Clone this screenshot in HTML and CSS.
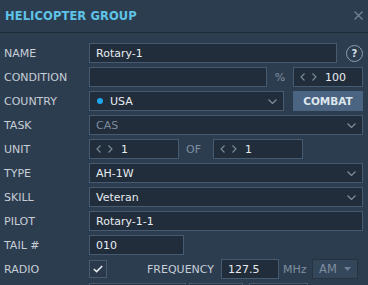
FILE: index.html
```html
<!DOCTYPE html>
<html lang="en">
<head>
  <meta charset="UTF-8" />
  <title>Helicopter Group</title>
  <link rel="stylesheet" href="styles.css">
</head>
<body>

  <div class="panel">
    <!-- Header -->
    <div class="header">
      <h1>HELICOPTER GROUP</h1>
      <svg class="close" width="9" height="9" viewBox="0 0 9 9">
        <path d="M0.5 0.5 L8.5 8.5 M8.5 0.5 L0.5 8.5" stroke="#6f8399" stroke-width="1.2" fill="none"/>
      </svg>
    </div>

    <!-- Form rows -->
    <div class="form">
      <div class="row">
        <span class="label">NAME</span>
        <div class="box grow">Rotary-1</div>
        <span class="help">?</span>
      </div>

      <div class="row">
        <span class="label">CONDITION</span>
        <div class="box w-cond"></div>
        <span class="unit pct">%</span>
        <div class="box spin w-small">
          <svg class="chev" width="5" height="8" viewBox="0 0 5 8"><path d="M4.5 0.5 L1 4 L4.5 7.5" /></svg>
          <svg class="chev" width="5" height="8" viewBox="0 0 5 8"><path d="M0.5 0.5 L4 4 L0.5 7.5" /></svg>
          <span class="num">100</span>
        </div>
      </div>

      <div class="row">
        <span class="label">COUNTRY</span>
        <div class="box select w-country">
          <span class="dot"></span>USA
          <svg class="caret" width="9" height="5" viewBox="0 0 9 5"><path d="M0.5 0.5 L4.5 4.5 L8.5 0.5" /></svg>
        </div>
        <button class="btn">COMBAT</button>
      </div>

      <div class="row">
        <span class="label">TASK</span>
        <div class="box select grow muted">
          CAS
          <svg class="caret" width="9" height="5" viewBox="0 0 9 5"><path d="M0.5 0.5 L4.5 4.5 L8.5 0.5" /></svg>
        </div>
      </div>

      <div class="row">
        <span class="label">UNIT</span>
        <div class="box spin w-unit">
          <svg class="chev" width="5" height="8" viewBox="0 0 5 8"><path d="M4.5 0.5 L1 4 L4.5 7.5" /></svg>
          <svg class="chev" width="5" height="8" viewBox="0 0 5 8"><path d="M0.5 0.5 L4 4 L0.5 7.5" /></svg>
          <span class="num">1</span>
        </div>
        <span class="unit of">OF</span>
        <div class="box spin w-unit">
          <svg class="chev" width="5" height="8" viewBox="0 0 5 8"><path d="M4.5 0.5 L1 4 L4.5 7.5" /></svg>
          <svg class="chev" width="5" height="8" viewBox="0 0 5 8"><path d="M0.5 0.5 L4 4 L0.5 7.5" /></svg>
          <span class="num">1</span>
        </div>
      </div>

      <div class="row">
        <span class="label">TYPE</span>
        <div class="box select grow">
          AH-1W
          <svg class="caret" width="9" height="5" viewBox="0 0 9 5"><path d="M0.5 0.5 L4.5 4.5 L8.5 0.5" /></svg>
        </div>
      </div>

      <div class="row">
        <span class="label">SKILL</span>
        <div class="box select grow">
          Veteran
          <svg class="caret" width="9" height="5" viewBox="0 0 9 5"><path d="M0.5 0.5 L4.5 4.5 L8.5 0.5" /></svg>
        </div>
      </div>

      <div class="row">
        <span class="label">PILOT</span>
        <div class="box grow">Rotary-1-1</div>
      </div>

      <div class="row">
        <span class="label">TAIL #</span>
        <div class="box w-tail">010</div>
      </div>

      <div class="row">
        <span class="label">RADIO</span>
        <div class="check">
          <svg width="10" height="8" viewBox="0 0 10 8"><path d="M0.8 4 L3.6 6.6 L9.2 1" stroke="#e6ebf0" stroke-width="1.6" fill="none"/></svg>
        </div>
        <span class="label freq">FREQUENCY</span>
        <div class="box w-freq">127.5</div>
        <span class="unit mhz">MHz</span>
        <div class="box am">
          AM
          <svg width="7" height="4" viewBox="0 0 7 4"><path d="M0 0 L7 0 L3.5 4 Z" fill="#6d7f92"/></svg>
        </div>
      </div>

      <!-- next row, cut off by the window -->
      <div class="row">
        <span class="label"></span>
        <div class="box w-stub1"></div>
        <div class="box w-stub2"></div>
        <div class="box w-stub3"></div>
      </div>
    </div>
  </div>

</body>
</html>
```

FILE: styles.css
```css
* {
  margin: 0;
  padding: 0;
  box-sizing: border-box;
}

body {
  background: #2d3d50;
  color: #e3e8ee;
  font-family: "DejaVu Sans", sans-serif;
  font-size: 11px;
  overflow: hidden;
  height: 285px;
}

.panel {
  width: 368px;
}

.header {
  height: 33px;
  display: flex;
  align-items: center;
  justify-content: space-between;
  padding: 0 5px 1px 5px;
  border-bottom: 1px solid #1e2936;
}

.header h1 {
  font-size: 11.5px;
  font-weight: bold;
  color: #5ec3e6;
  letter-spacing: 0.1px;
}

.form {
  padding: 10px 5px 0 0;
  display: flex;
  flex-direction: column;
  gap: 4px;
}

.row {
  display: flex;
  align-items: center;
  height: 20px;
}

.label {
  width: 89px;
  padding-left: 4px;
  color: #c6ced6;
  flex-shrink: 0;
}

.box {
  height: 20px;
  background: #222d3b;
  border: 1px solid #465a71;
  display: flex;
  align-items: center;
  padding: 0 6px;
  color: #e6ebf0;
  flex-shrink: 0;
}

.grow {
  flex: 1;
}

.muted {
  color: #7d8c9c;
}

.help {
  width: 17px;
  height: 17px;
  margin-left: 9px;
  border: 1.5px solid #8d9fb2;
  border-radius: 50%;
  color: #d5dde5;
  font-weight: bold;
  font-size: 10px;
  display: flex;
  align-items: center;
  justify-content: center;
  flex-shrink: 0;
}

.w-cond { width: 178px; }
.w-small { width: 70px; }
.w-country { width: 195px; }
.w-unit { width: 90px; }
.w-tail { width: 95px; }
.w-freq { width: 58px; }

.unit {
  color: #7f8fa0;
  flex-shrink: 0;
}

.pct {
  width: 26px;
  text-align: center;
}

.of {
  width: 34px;
  padding-left: 7px;
}

.spin .chev {
  fill: none;
  stroke: #7d8d9e;
  stroke-width: 1.1;
  margin-right: 7px;
}

.spin .chev + .chev {
  margin-right: 8px;
}

.caret {
  margin-left: auto;
  fill: none;
  stroke: #7d8d9e;
  stroke-width: 1.2;
}

.dot {
  width: 6px;
  height: 6px;
  border-radius: 50%;
  background: #1ea7ec;
  margin: 0 7px 0 1px;
}

.btn {
  width: 70px;
  height: 20px;
  margin-left: 9px;
  background: #4a6482;
  border: none;
  color: #dfe6ee;
  font-family: "DejaVu Sans", sans-serif;
  font-weight: bold;
  font-size: 10.5px;
  flex-shrink: 0;
}

.check {
  width: 18px;
  height: 18px;
  border: 1px solid #465a71;
  background: #2a394b;
  display: flex;
  align-items: center;
  justify-content: center;
  flex-shrink: 0;
}

.freq {
  width: auto;
  padding-left: 40px;
  margin-right: 7px;
}

.mhz {
  width: 33px;
  padding-left: 4px;
}

.am {
  width: 46px;
  background: #34465a;
  border-color: #27333f;
  color: #7d8e9f;
  justify-content: space-between;
  font-size: 11.5px;
}

.w-stub1 { width: 97px; }
.w-stub2 { width: 54px; margin-left: 3px; }
.w-stub3 { width: 59px; margin-left: 6px; }
```
